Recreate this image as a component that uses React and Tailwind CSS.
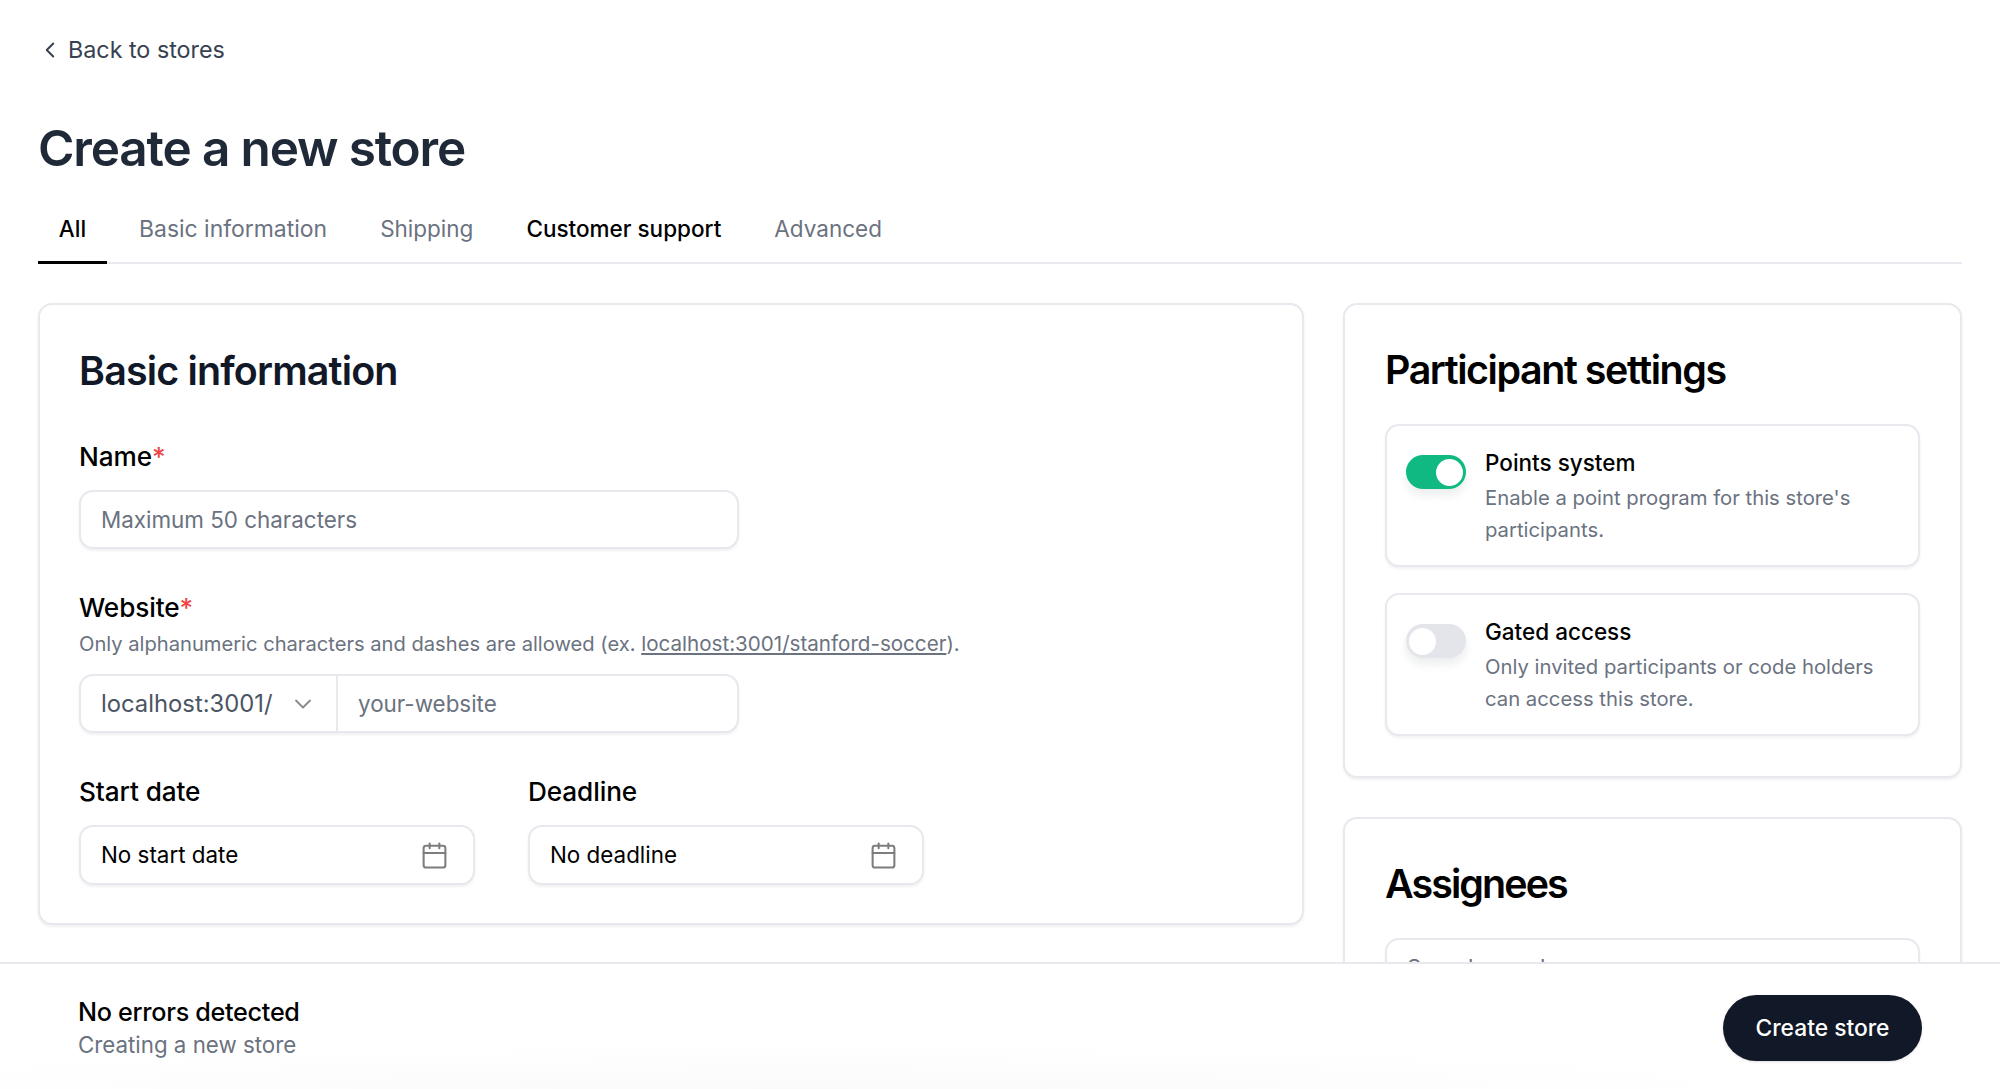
import React from "react";
import { ChevronLeft, ChevronDown, Calendar } from "lucide-react";

const box = "rounded-[14px] border-2 border-[#e8e8ee] bg-white shadow-[0_2px_3px_rgba(16,24,40,0.06)]";

function Field({ label, required, hint, children }) {
  return (
    <div>
      <div className="text-[26.2px] leading-[32px] font-medium text-black tracking-[-0.1px]">
        {label}
        {required && <span className="text-[#ef4444]">*</span>}
      </div>
      {hint}
      {children}
    </div>
  );
}

function Toggle({ on }) {
  return (
    <div className={`flex h-[34px] w-[60px] shrink-0 items-center rounded-full p-[3px] shadow-[0_6px_10px_rgba(16,24,40,0.08)] ${on ? "justify-end bg-[#10b981]" : "justify-start bg-[#e4e5ea]"}`}>
      <div className="size-[27px] rounded-full bg-white" />
    </div>
  );
}

function Setting({ on, title, lines }) {
  return (
    <div className={`${box} flex h-[143px] gap-[19px] pl-[19px] pr-[20px] pt-[21px]`}>
      <div className="pt-[8px]"><Toggle on={on} /></div>
      <div>
        <div className="text-[22.5px] leading-[32px] font-medium text-black">{title}</div>
        <div className="mt-[3px] text-[20.3px] leading-[31.5px] text-[#6b7280]">{lines[0]}<br />{lines[1]}</div>
      </div>
    </div>
  );
}

function DateField({ label, text }) {
  return (
    <Field label={label}>
      <div className={`${box} mt-[17px] flex h-[60px] w-[396px] items-center justify-between pl-[20px] pr-[24px]`}>
        <span className="text-[22.4px] text-black">{text}</span>
        <Calendar className="size-[29px] text-[#7d7d7d]" strokeWidth={1.7} />
      </div>
    </Field>
  );
}

export default function App() {
  return (
    <div className="flex h-screen flex-col overflow-hidden bg-white font-['Inter',sans-serif]">
      <div className="min-h-0 flex-1 overflow-hidden px-[38px]">
        <div className="flex h-[100px] items-center gap-[5px] text-[#374151]">
          <ChevronLeft className="-ml-[1px] size-[26px]" strokeWidth={1.8} />
          <span className="text-[23.3px] font-normal">Back to stores</span>
        </div>
        <h1 className="mt-[16px] text-[49.5px] leading-[64px] font-semibold tracking-[-1.15px] text-[#1f2937]">Create a new store</h1>
        <div className="mt-[16px] flex h-[68px] border-b-2 border-[#e8e8ee] text-[22.5px]">
          <div className="mb-[-2px] flex w-[69px] items-center justify-center border-b-[3px] border-black font-medium text-black">All</div>
          <div className="ml-[32px] flex items-center text-[22.95px] text-[#6b7280]">Basic information</div>
          <div className="ml-[53px] flex items-center text-[#6b7280]">Shipping</div>
          <div className="ml-[53px] flex items-center font-medium text-black">Customer support</div>
          <div className="ml-[53px] flex items-center text-[#6b7280]">Advanced</div>
        </div>
        <div className="mt-[39px] flex gap-[39px]">
          <div className="w-[1266px] shrink-0">
            <div className={`${box} h-[622px] px-[39px] pt-[41px]`}>
              <h2 className="text-[39.4px] leading-[50px] font-semibold tracking-[-0.82px] text-[#111827]">Basic information</h2>
              <div className="mt-[45px]">
                <Field label="Name" required>
                  <div className={`${box} mt-[17px] flex h-[59px] w-[660px] items-center px-[20px] text-[22.4px] text-[#6b7280]`}>Maximum 50 characters</div>
                </Field>
              </div>
              <div className="mt-[43px]">
                <Field
                  label="Website"
                  required
                  hint={
                    <div className="mt-[6px] text-[20.15px] leading-[28px] text-[#6b7280]">
                      Only alphanumeric characters and dashes are allowed (ex. <span className="text-[20.6px] underline">localhost:3001/stanford-soccer</span>).
                    </div>
                  }
                >
                  <div className={`${box} mt-[16px] flex h-[59px] w-[660px] items-center text-[22.4px]`}>
                    <div className="flex h-full w-[257px] items-center justify-between border-r-2 border-[#e8e8ee] pl-[20px] pr-[19px] text-[#4b5563]">
                      <span className="text-[23.8px]">localhost:3001/</span>
                      <ChevronDown className="size-[28px] text-[#8a8a8a]" strokeWidth={1.6} />
                    </div>
                    <div className="pl-[20px] text-[#6b7280]">your-website</div>
                  </div>
                </Field>
              </div>
              <div className="mt-[43px] flex gap-[53px]">
                <DateField label="Start date" text="No start date" />
                <DateField label="Deadline" text="No deadline" />
              </div>
            </div>
          </div>
          <div className="flex min-w-0 flex-1 flex-col gap-[39px]">
            <div className={`${box} h-[475px] px-[40px] pt-[40px]`}>
              <h2 className="text-[39.4px] leading-[50px] font-semibold tracking-[-1.43px] text-black">Participant settings</h2>
              <div className="mt-[29px] flex flex-col gap-[26px]">
                <Setting on title="Points system" lines={["Enable a point program for this store's", "participants."]} />
                <Setting title="Gated access" lines={["Only invited participants or code holders", "can access this store."]} />
              </div>
            </div>
            <div className={`${box} h-[300px] px-[40px] pt-[40px]`}>
              <h2 className="text-[39.4px] leading-[50px] font-semibold tracking-[-1.9px] text-black">Assignees</h2>
              <div className={`${box} mt-[29px] flex h-[59px] items-center px-[20px] text-[22.4px] text-[#6b7280]`}>Search members</div>
            </div>
          </div>
        </div>
      </div>
      <div className="flex h-[127px] shrink-0 items-center justify-between border-t-2 border-[#e8e8ee] bg-[radial-gradient(ellipse_50%_35%_at_40%_100%,#fafafb,#ffffff)] pl-[78px] pr-[78px] pt-[3px]">
        <div>
          <div className="text-[25.2px] leading-[32px] font-medium tracking-[-0.3px] text-black">No errors detected</div>
          <div className="mt-[1px] text-[22.3px] leading-[32px] text-[#6b7280]">Creating a new store</div>
        </div>
        <button className="flex h-[66px] w-[199px] items-center justify-center rounded-[33px] bg-[#111827] text-[22.8px] font-medium text-white shadow-sm">Create store</button>
      </div>
    </div>
  );
}
